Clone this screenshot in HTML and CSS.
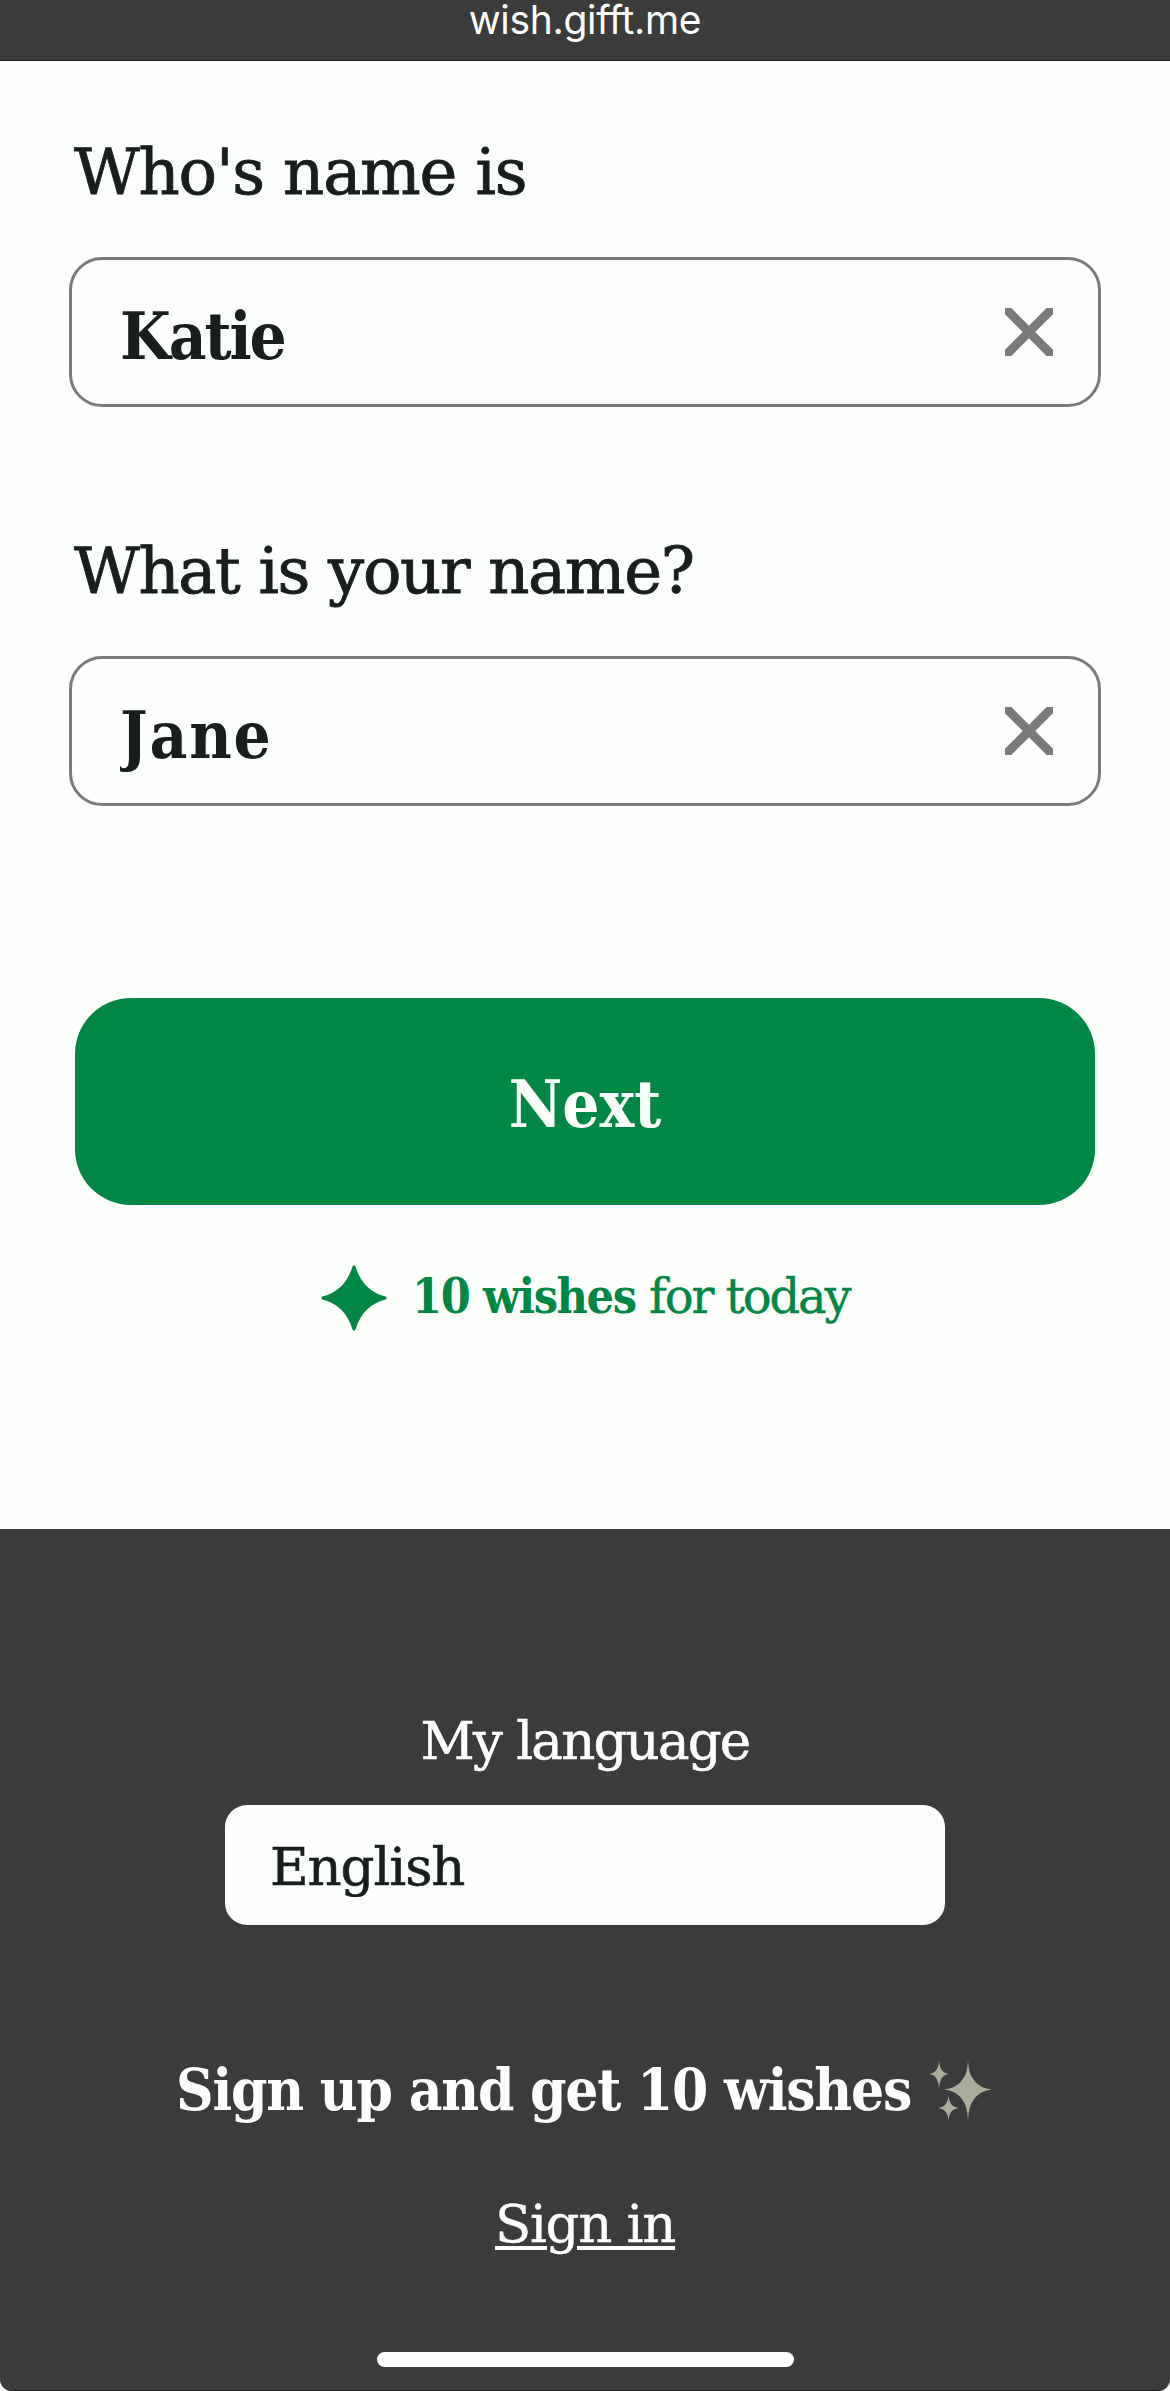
FILE: index.html
```html
<!DOCTYPE html>
<html lang="en">
<head>
  <meta charset="UTF-8" />
  <meta name="viewport" content="width=device-width, initial-scale=1.0"/>
  <title>Gifft wishes</title>
  <link rel="stylesheet" href="styles.css">
</head>
<body>
  <header class="address-bar">wish.gifft.me</header>

  <main>
    <form id="wishForm">
      <div class="field">
        <label class="label-friend" for="friend">Who's name is</label>
        <div class="input-box">
          <input class="input-friend" type="text" id="friend" value="Katie" />
          <button class="clear" type="button" aria-label="Clear">
            <svg viewBox="0 0 48 48"><path d="M-2 -2L50 50M50 -2L-2 50" /></svg>
          </button>
        </div>
      </div>

      <div class="field">
        <label class="label-name" for="name">What is your name?</label>
        <div class="input-box">
          <input class="input-name" type="text" id="name" value="Jane" />
          <button class="clear" type="button" aria-label="Clear">
            <svg viewBox="0 0 48 48"><path d="M-2 -2L50 50M50 -2L-2 50" /></svg>
          </button>
        </div>
      </div>

      <button class="next" type="submit"><span>Next</span></button>
    </form>

    <p class="wishes">
      <svg class="star" viewBox="0 0 66 66"><path d="M31.500 1.500Q33 -1 34.500 1.500Q42 26 64.500 31.500Q67 33 64.500 34.500Q42 40 34.500 64.500Q33 67 31.500 64.500Q24 40 1.500 34.500Q-1 33 1.500 31.500Q24 26 31.500 1.500Z" /></svg>
      <b>10 wishes</b>
      <span>for today</span>
    </p>
  </main>

  <footer>
    <label class="language-label" for="language">My language</label>
    <select id="language">
      <option>English</option>
    </select>

    <div class="sign-up">
      <span>Sign up and get 10 wishes</span>
      <svg class="sparkles" viewBox="0 0 64 62">
        <path d="M39 1Q40 27 63 29.500Q40 32 39 60Q38 32 15 29.500Q38 27 39 1Z" />
        <path d="M10 0Q10.500 13 20 14Q10.500 15 10 29Q9.500 15 0 14Q9.500 13 10 0Z" />
        <path d="M19.500 35Q20 47 30 48Q20 49 19.500 61Q19 49 9 48Q19 47 19.500 35Z" />
      </svg>
    </div>
    <a class="sign-in" href="#">Sign in</a>

    <div class="home-indicator"></div>
  </footer>
</body>
</html>
```
FILE: styles.css
```css
* {
  box-sizing: border-box;
}

body {
  margin: 0;
  background: #fdfffc;
  color: #181e1b;
  font-family: "Roboto Slab", "DejaVu Serif", serif;
}

b,
.input-box input,
.next,
.sign-up {
  font-family: "Roboto Slab", "DejaVu Serif Condensed", "DejaVu Serif", serif;
  font-weight: bold;
}

.address-bar {
  height: 61px;
  background: #3a3b3a;
  border-bottom: 1px solid #181e1b;
  color: #fdfffc;
  font-family: Inter, sans-serif;
  font-size: 39px;
  font-variant-ligatures: none;
  letter-spacing: -0.3px;
  line-height: 40px;
  text-align: center;
}

main {
  height: 1468px;
  padding: 71px 69px 0;
}

.field {
  height: 399px;
}

.field label {
  display: block;
  height: 125px;
  padding-left: 5px;
  font-size: 64px;
  letter-spacing: -1.2px;
  line-height: 80px;
  white-space: nowrap;
  -webkit-text-stroke: 0.9px currentColor;
}

.field .label-name {
  letter-spacing: -1.35px;
}

.input-box {
  display: flex;
  align-items: center;
  height: 150px;
  padding: 0 45px 0 48px;
  border: 3px solid #797b79;
  border-radius: 33px;
}

.input-box input {
  flex: 1;
  min-width: 0;
  height: 100px;
  padding: 7px 0 0;
  border: 0;
  outline: 0;
  background: none;
  color: inherit;
  font-size: 65px;
}

.input-friend {
  letter-spacing: -2.1px;
}

.input-name {
  letter-spacing: 1.8px;
}

.clear {
  width: 48px;
  height: 48px;
  padding: 0;
  border: 0;
  background: none;
}

.clear svg {
  display: block;
  stroke: #797b79;
  stroke-width: 9;
}

.next {
  display: block;
  width: 1020px;
  height: 207px;
  margin: 68px 6px 0;
  padding: 4px 0 0;
  border: 0;
  border-radius: 56px;
  background: #008744;
  color: #fdfffc;
  font-size: 65px;
}

.wishes {
  display: flex;
  align-items: center;
  height: 66px;
  margin: 60px 0 0;
  padding-left: 252px;
  color: #008744;
  font-size: 48px;
  line-height: 62px;
  white-space: nowrap;
}

.wishes b,
.wishes span {
  height: 66px;
}

.star {
  width: 66px;
  height: 66px;
  margin-right: 25px;
  fill: #008744;
}

.wishes b {
  width: 237px;
  letter-spacing: -1.4px;
}

.wishes span {
  letter-spacing: -2.1px;
  -webkit-text-stroke: 0.4px currentColor;
}

footer {
  display: flex;
  flex-direction: column;
  align-items: center;
  height: 862px;
  padding-top: 176px;
  background: #3a3b3a;
  border-bottom: 1px solid #181e1b;
  border-radius: 0 0 12px 12px;
  color: #fdfffc;
}

.language-label {
  height: 100px;
  font-size: 53px;
  letter-spacing: -1.8px;
  line-height: 72px;
  -webkit-text-stroke: 0.6px currentColor;
}

#language {
  appearance: none;
  width: 720px;
  height: 120px;
  padding: 2px 45px 0;
  border: 0;
  border-radius: 22px;
  background: #fdfffc;
  color: #181e1b;
  font-family: inherit;
  font-size: 53px;
  letter-spacing: -1.1px;
  -webkit-text-stroke: 0.6px currentColor;
}

.sign-up {
  display: flex;
  align-items: flex-start;
  width: 818px;
  height: 140px;
  margin-top: 125px;
  font-size: 58px;
  letter-spacing: -1.25px;
  line-height: 80px;
  white-space: nowrap;
}

.sign-up span {
  width: 753px;
}

.sparkles {
  width: 64px;
  height: 62px;
  margin-top: 10px;
  fill: #a9ad9b;
}

.sign-in {
  height: 162px;
  color: inherit;
  font-size: 53px;
  letter-spacing: -1.3px;
  line-height: 68px;
  text-decoration-thickness: 4px;
  text-underline-offset: 4px;
  -webkit-text-stroke: 0.4px currentColor;
}

.home-indicator {
  width: 417px;
  height: 15px;
  border-radius: 8px;
  background: #fdfffc;
}
```
